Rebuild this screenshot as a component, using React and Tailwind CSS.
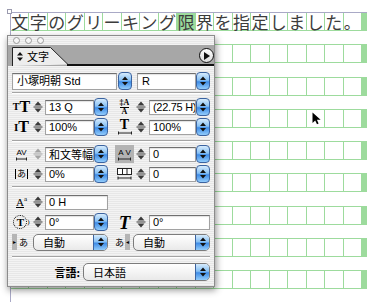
import React from "react";

const chars = "文字のグリーキング限界を指定しました。".split("");
const rows = [0, 1, 2, 3, 4, 5, 6, 7, 8];

const ui = "font-['Liberation_Sans','Noto_Sans_CJK_JP',sans-serif]";
const serif = "font-['Liberation_Serif',serif]";

function DocRow({ index }) {
  const first = index === 0;
  return (
    <div
      className={
        first
          ? "flex h-[18px] shrink-0 border-b border-[#9ddb9d]"
          : "flex h-[19px] shrink-0 border-y border-[#9ddb9d]"
      }
    >
      <div className="grid w-[351px] grid-cols-[repeat(19,minmax(0,1fr))]">
        {chars.map((c, i) => (
          <div
            key={i}
            className={`flex items-center justify-center border-r border-[#9ddb9d] ${
              first && i === 9 ? "bg-[#9ddb9d]" : ""
            }`}
          >
            {first && (
              <span className="font-['Noto_Sans_CJK_JP',sans-serif] text-[17px] leading-none text-[#3c3c3c]">
                {c}
              </span>
            )}
          </div>
        ))}
      </div>
      <div className="flex-1 bg-[#9ddb9d]" />
    </div>
  );
}

// Blue aqua popup arrows
function Aqua() {
  return (
    <div className="flex h-[18px] w-[14px] shrink-0 items-center justify-center rounded-[4px] border border-[#3b63a0] bg-[linear-gradient(180deg,#d6ebfc_0%,#86c0f4_45%,#3f8ce6_55%,#92ccfb_100%)]">
      <svg width="6" height="10" viewBox="0 0 6 10">
        <path d="M0 4L3 0.5L6 4Z M0 6L3 9.5L6 6Z" fill="#111" />
      </svg>
    </div>
  );
}

function Stepper({ dim }) {
  const c = dim ? "#a4a4a4" : "#3a3a3a";
  return (
    <svg width="10" height="14" viewBox="0 0 10 14" className="shrink-0">
      <path d="M1.5 5.5L5 1.5L8.5 5.5Z" fill={c} />
      <rect x="0.5" y="6.5" width="9" height="1" fill={c} />
      <path d="M1.5 8.5L5 12.5L8.5 8.5Z" fill={c} />
    </svg>
  );
}

// small horizontal double arrow under icon letters
function HArrow({ w = 12 }) {
  return (
    <svg width={w} height="4" viewBox={`0 0 ${w} 4`} className="shrink-0">
      <path d={`M0.5 2H${w - 0.5}M0.5 0.5V3.5M${w - 0.5} 0.5V3.5`} stroke="#222" strokeWidth="1" />
    </svg>
  );
}

function Field({ className = "", children }) {
  return (
    <div
      className={`flex h-[15px] shrink-0 items-center overflow-hidden whitespace-nowrap border border-[#a2a2a2] border-t-[#707070] bg-white pl-[3px] text-[11px] leading-none text-black shadow-[inset_0_1px_1px_rgba(0,0,0,0.12)] ${className}`}
    >
      {children}
    </div>
  );
}

function Popup({ className = "", children }) {
  return (
    <div
      className={`flex h-[17px] shrink-0 items-stretch overflow-hidden rounded-[5px] border border-[#7c7c7c] bg-[linear-gradient(180deg,#ffffff,#e9e9e9)] ${className}`}
    >
      <span className="flex flex-1 items-center pl-[9px] text-[11px] leading-none text-black">
        {children}
      </span>
      <div className="flex w-[14px] items-center justify-center border-l border-[#3b63a0] bg-[linear-gradient(180deg,#d6ebfc_0%,#86c0f4_45%,#3f8ce6_55%,#92ccfb_100%)]">
        <svg width="6" height="10" viewBox="0 0 6 10">
          <path d="M0 4L3 0.5L6 4Z M0 6L3 9.5L6 6Z" fill="#111" />
        </svg>
      </div>
    </div>
  );
}

function Icon({ children, className = "" }) {
  return (
    <div className={`flex h-[18px] w-[19px] shrink-0 items-center justify-center text-black ${className}`}>
      {children}
    </div>
  );
}

function Sep() {
  return <div className="h-[2px] w-[198px] border-t border-b border-t-[#a4a4a4] border-b-white" />;
}

function Half({ icon, dim, value, right, noButton, fieldClass }) {
  return (
    <div className={right ? "ml-[5px] flex w-[95px] items-center" : "flex w-[98px] items-center"}>
      {icon}
      <div className="ml-[2px]">
        <Stepper dim={dim} />
      </div>
      <Field className={`${right ? "ml-[3px]" : "ml-[2px]"} ${fieldClass}`}>{value}</Field>
      {!noButton && <Aqua />}
    </div>
  );
}

const App = () => {
  return (
    <div className="relative h-[302px] w-[367px] overflow-hidden bg-white">
      {/* Text frame with grid */}
      <div className="ml-[10px] mt-[12px] flex h-[290px] flex-col gap-[13.25px] border-l border-t border-[#a9a9c6]">
        {rows.map((r) => (
          <DocRow key={r} index={r} />
        ))}
      </div>
      <div className="absolute left-[7px] top-[9px] h-[5px] w-[5px] border border-[#9a9aae] bg-white" />

      {/* Character palette */}
      <div
        className={`absolute left-[7px] top-[35px] flex h-[252px] w-[208px] flex-col border border-[#8c8c8c] bg-[repeating-linear-gradient(180deg,#f3f3f3_0px,#f3f3f3_1px,#e7e7e7_1px,#e7e7e7_2px)] shadow-[1px_3px_7px_rgba(0,0,0,0.45)] ${ui}`}
      >
        {/* Title bar */}
        <div className="flex h-[9px] items-center gap-[5px] pl-[5px]">
          <div className="h-[7px] w-[7px] rounded-full border border-[#999] bg-[#f6f6f6]" />
          <div className="h-[7px] w-[7px] rounded-full border border-[#999] bg-[#f6f6f6]" />
          <div className="h-[7px] w-[7px] rounded-full border border-[#999] bg-[#f6f6f6]" />
        </div>

        {/* Tab row */}
        <div className="relative h-[21px] bg-[#a7a7a7]">
          <svg className="absolute left-0 top-0" width="206" height="21" viewBox="0 0 206 21">
            <path d="M4.5 21V2.5H42.5L60 19.5" fill="#ededed" stroke="#222" strokeWidth="1" />
            <rect x="59" y="19" width="147" height="2" fill="#111" />
          </svg>
          <div className="absolute left-[9px] top-[3px] flex h-[17px] items-center gap-[4px]">
            <svg width="6" height="9" viewBox="0 0 6 9">
              <path d="M0 3.5L3 0L6 3.5Z M0 5.5L3 9L6 5.5Z" fill="#111" />
            </svg>
            <span className="font-['Noto_Sans_CJK_JP',sans-serif] text-[11px] leading-none text-black">文字</span>
          </div>
          <div className="absolute right-[0px] top-[3px] flex h-[15px] w-[15px] items-center justify-center rounded-full border-[1.5px] border-[#111] bg-[linear-gradient(180deg,#ffffff,#dcdcdc)]">
            <svg width="6" height="8" viewBox="0 0 6 8" className="ml-[1px]">
              <path d="M0 0L6 4L0 8Z" fill="#111" />
            </svg>
          </div>
        </div>

        {/* Controls */}
        <div className="flex flex-col pl-[4px] pt-[6px]">
          <div className="flex h-[18px] items-center">
            <Field className="h-[17px] w-[105px] pl-[4px]">小塚明朝 Std</Field>
            <div className="ml-[1px]">
              <Aqua />
            </div>
            <Field className="ml-[5px] h-[17px] w-[59px] pl-[4px]">R</Field>
            <Aqua />
          </div>

          <div className="mt-[2px]">
            <Sep />
          </div>

          <div className="mt-[4px] flex h-[18px]">
            <Half
              icon={
                <Icon className={`${serif} font-bold leading-none`}>
                  <span className="text-[10px]">T</span>
                  <span className="text-[16px]">T</span>
                </Icon>
              }
              value="13 Q"
              fieldClass="w-[49px]"
            />
            <Half
              right
              icon={
                <Icon className={`${serif} flex-col font-bold leading-none`}>
                  <span className="border-b border-black text-[8px] leading-[8px]">‡A</span>
                  <span className="text-[8px] leading-[8px]">A</span>
                </Icon>
              }
              value="(22.75 H)"
              fieldClass="w-[47px] tracking-[-0.3px]"
            />
          </div>

          <div className="mt-[2px] flex h-[18px]">
            <Half
              icon={
                <Icon className={`${serif} font-bold leading-none`}>
                  <span className="text-[11px]">I</span>
                  <span className="text-[16px]">T</span>
                </Icon>
              }
              value="100%"
              fieldClass="w-[49px]"
            />
            <Half
              right
              icon={
                <Icon className={`${serif} flex-col font-bold leading-none`}>
                  <span className="text-[14px] leading-[12px]">T</span>
                  <HArrow w={14} />
                </Icon>
              }
              value="100%"
              fieldClass="w-[47px]"
            />
          </div>

          <div className="mt-[4px]">
            <Sep />
          </div>

          <div className="mt-[3px] flex h-[18px]">
            <Half
              dim
              icon={
                <Icon className="flex-col leading-none">
                  <span className="text-[8px] leading-[9px]">AV</span>
                  <HArrow w={11} />
                </Icon>
              }
              value={<span className="font-['Noto_Sans_CJK_JP',sans-serif]">和文等幅</span>}
              fieldClass="w-[49px]"
            />
            <Half
              right
              icon={
                <Icon className="flex-col bg-[#b3b3b3] leading-none">
                  <span className="text-[8px] leading-[9px]">A V</span>
                  <HArrow w={13} />
                </Icon>
              }
              value="0"
              fieldClass="w-[47px]"
            />
          </div>

          <div className="mt-[2px] flex h-[18px]">
            <Half
              icon={
                <Icon>
                  <span className="border-x border-black px-[1px] font-['Noto_Sans_CJK_JP',sans-serif] text-[9px] leading-[10px]">
                    あ
                  </span>
                </Icon>
              }
              value="0%"
              fieldClass="w-[49px]"
            />
            <Half
              right
              icon={
                <Icon>
                  <svg width="15" height="12" viewBox="0 0 15 12">
                    <rect x="0.5" y="0.5" width="14" height="6" fill="#fff" stroke="#222" />
                    <path d="M5.5 0.5V6.5M10 0.5V6.5" stroke="#222" />
                    <path d="M1 10H14M1 8.5V11.5M14 8.5V11.5" stroke="#222" />
                  </svg>
                </Icon>
              }
              value="0"
              fieldClass="w-[47px]"
            />
          </div>

          <div className="mt-[3px]">
            <Sep />
          </div>

          <div className="mt-[5px] flex h-[18px]">
            <Half
              noButton
              icon={
                <Icon className={`${serif} leading-none`}>
                  <span className="border-b border-black text-[11px] leading-[10px]">A</span>
                  <span className="mb-[6px] text-[7px] leading-none">a</span>
                </Icon>
              }
              value="0 H"
              fieldClass="w-[63px]"
            />
          </div>

          <div className="mt-[2px] flex h-[18px]">
            <Half
              icon={
                <Icon className={serif}>
                  <div className="flex h-[14px] w-[14px] items-center justify-center rounded-full border border-dotted border-black text-[11px] font-bold leading-none">
                    T
                  </div>
                  <span className="text-[7px] leading-none">)</span>
                </Icon>
              }
              value="0°"
              fieldClass="w-[49px]"
            />
            <Half
              right
              noButton
              icon={
                <Icon className={`${serif} text-[19px] font-bold italic leading-none`}>T</Icon>
              }
              value="0°"
              fieldClass="w-[61px]"
            />
          </div>

          <div className="mt-[2px] flex h-[18px] items-center">
            <div className="flex w-[98px] items-center">
              <div className="flex h-[18px] w-[19px] items-center">
                <div className="flex h-[16px] w-[5px] items-center justify-center bg-[#b5b5b5] text-[6px] leading-none">▸</div>
                <span className="ml-[2px] font-['Noto_Sans_CJK_JP',sans-serif] text-[9px] leading-none">あ</span>
              </div>
              <Popup className="ml-[2px] w-[75px]">
                <span className="font-['Noto_Sans_CJK_JP',sans-serif]">自動</span>
              </Popup>
            </div>
            <div className="ml-[5px] flex w-[95px] items-center">
              <div className="flex h-[18px] w-[17px] items-center">
                <span className="font-['Noto_Sans_CJK_JP',sans-serif] text-[9px] leading-none">あ</span>
                <div className="ml-[1px] flex h-[16px] w-[5px] items-center justify-center bg-[#b5b5b5] text-[6px] leading-none">◂</div>
              </div>
              <Popup className="ml-[1px] w-[77px]">
                <span className="font-['Noto_Sans_CJK_JP',sans-serif]">自動</span>
              </Popup>
            </div>
          </div>

          <div className="mt-[5px]">
            <Sep />
          </div>

          <div className="mt-[5px] flex h-[18px] items-center">
            <span className="w-[71px] pr-[3px] text-right font-['Noto_Sans_CJK_JP',sans-serif] text-[11px] font-bold leading-none">
              言語:
            </span>
            <Popup className="h-[18px] w-[127px]">
              <span className="font-['Noto_Sans_CJK_JP',sans-serif]">日本語</span>
            </Popup>
          </div>
        </div>
      </div>

      {/* Mouse pointer */}
      <svg className="absolute left-[312px] top-[112px]" width="10" height="13" viewBox="0 0 10 13">
        <path d="M0.5 0.5V11L3.2 8.4L5 12.3L6.6 11.6L4.9 7.8H8.6Z" fill="#000" />
      </svg>
    </div>
  );
};

export default App;
